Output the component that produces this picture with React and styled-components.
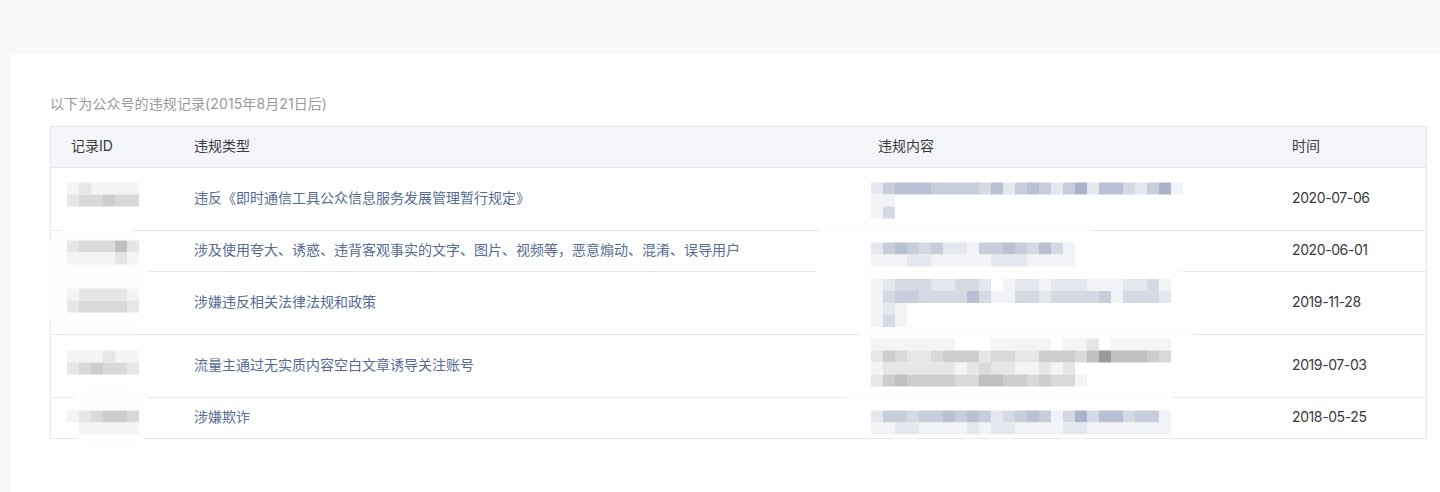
import React from "react";
import styled, { createGlobalStyle } from "styled-components";

const GlobalStyle = createGlobalStyle`
  html, body { margin: 0; padding: 0; background: #f6f7f9; }
  body { font-family: Inter, "Noto Sans CJK SC", "Noto Sans", sans-serif; -webkit-font-smoothing: antialiased; }
`;

const Page = styled.div`
  padding: 54px 0 0 10px;
  min-height: 492px;
  box-sizing: border-box;
  display: flex;
`;

const Card = styled.section`
  flex: 1;
  background: #ffffff;
  border-radius: 4px 0 0 0;
  padding: 40px 13px 60px 40px;
`;

const Caption = styled.p`
  margin: 0 0 12px;
  padding-bottom: 2px;
  height: 18px;
  font-size: 14px;
  line-height: 20px;
  color: #9a9a9a;
  letter-spacing: 0.1px;
`;

const TableWrap = styled.div`
  position: relative;
  border: 1px solid #e5e7ec;
`;

const Row = styled.div`
  display: grid;
  grid-template-columns: 123px 684px 414px 154px;
  align-items: center;
  height: ${(p) => (p.$tall ? 62 : 40)}px;
  border-bottom: ${(p) => (p.$last ? "none" : "1px solid #e5e7ec")};
  background: ${(p) => (p.$head ? "#f4f5f9" : "transparent")};
  font-size: 14px;
  line-height: 20px;
`;

const Cell = styled.div`
  padding: 0 20px 2px;
  color: ${(p) => (p.$link ? "#576b95" : "#3a3a3a")};
  letter-spacing: ${(p) => (p.$num ? "-0.4px" : "normal")};
  white-space: nowrap;
  position: relative;
  z-index: 2;
`;

const MosaicGrid = styled.div`
  display: grid;
  grid-auto-flow: row;
  grid-auto-rows: 12px;
  grid-template-columns: repeat(${(p) => p.$cols}, 12px);
  margin-left: ${(p) => p.$dx}px;
  transform: translateY(${(p) => p.$dy}px);
`;

const Px = styled.span`
  display: block;
  background: ${(p) => p.$c};
`;

const Smear = styled.div`
  position: absolute;
  z-index: 1;
  left: ${(p) => p.$x}px;
  top: ${(p) => p.$y}px;
  width: ${(p) => p.$w}px;
  height: ${(p) => p.$h}px;
  background: #fefefe;
  border-radius: ${(p) => p.$r || 6}px;
`;

const BLUE = ["transparent", "#f2f3f7", "#e4e7ee", "#d5d9e4", "#c8cddb", "#bac0d3", "#aab3c9"];
const GRAY = ["transparent", "#f4f4f4", "#e6e6e6", "#d9d9d9", "#cdcdcd", "#c0c0c0", "#999999"];

function Mosaic({ rows, palette, dx = 0, dy = 0 }) {
  const cols = Math.max(...rows.map((r) => r.length));
  const cells = [];
  rows.forEach((r, ri) => {
    for (let i = 0; i < cols; i++) {
      const v = i < r.length ? Number(r[i]) : 0;
      cells.push(<Px key={ri + "-" + i} $c={palette[v]} />);
    }
  });
  return (
    <MosaicGrid $cols={cols} $dx={dx} $dy={dy}>
      {cells}
    </MosaicGrid>
  );
}

const records = [
  {
    tall: true,
    id: { rows: ["121111", "233433"], dy: -3.5 },
    type: "违反《即时通信工具公众信息服务发展管理暂行规定》",
    content: {
      palette: BLUE,
      rows: ["24555444435245424625532461", "11", "13"],
      dy: 2.5,
    },
    date: "2020-07-06",
  },
  {
    tall: false,
    id: { rows: ["233352", "111121"], dy: 2.5 },
    type: "涉及使用夸大、诱惑、违背客观事实的文字、图片、视频等，恶意煽动、混淆、误导用户",
    content: {
      palette: BLUE,
      rows: ["24543422144543531", "11122111112221111"],
      dy: 4.5,
    },
    date: "2020-06-01",
  },
  {
    tall: true,
    id: { rows: ["122221", "233332"], dy: -1.5 },
    type: "涉嫌违反相关法律法规和政策",
    content: {
      palette: BLUE,
      rows: [
        "1233322332012212221112231",
        "1344333353113323333413332",
        "121",
        "131",
      ],
      dy: 1,
    },
    date: "2019-11-28",
  },
  {
    tall: true,
    id: { rows: ["111211", "234332"], dy: -2.5 },
    type: "流量主通过无实质内容空白文章诱导关注账号",
    content: {
      palette: GRAY,
      rows: [
        "1111111000111110112011111",
        "2432234442332244435655543",
        "12222221232211212",
        "245444433554434331",
      ],
      dy: -2.5,
    },
    date: "2019-07-03",
  },
  {
    tall: false,
    id: { rows: ["123443", "011111"], dy: 5.5 },
    type: "涉嫌欺诈",
    content: {
      palette: BLUE,
      rows: ["2443445454234541363553441", "1122111121221111221111111"],
      dy: 5.5,
    },
    date: "2018-05-25",
  },
];

const smears = [
  { x: -6, y: 100, w: 104, h: 107, r: 30 },
  { x: 22, y: 258, w: 75, h: 62, r: 20 },
  { x: 768, y: 98, w: 272, h: 12, r: 6 },
  { x: 765, y: 139, w: 367, h: 12, r: 6 },
  { x: 808, y: 201, w: 334, h: 13, r: 6 },
  { x: 795, y: 264, w: 327, h: 14, r: 7 },
];

export default function App() {
  return (
    <>
      <GlobalStyle />
      <Page>
        <Card>
          <Caption>以下为公众号的违规记录(2015年8月21日后)</Caption>
          <TableWrap>
            <Row $head>
              <Cell>记录ID</Cell>
              <Cell>违规类型</Cell>
              <Cell>违规内容</Cell>
              <Cell>时间</Cell>
            </Row>
            {records.map((r, i) => (
              <Row key={i} $tall={r.tall} $last={i === records.length - 1}>
                <Cell>
                  <Mosaic rows={r.id.rows} palette={GRAY} dx={-4} dy={r.id.dy} />
                </Cell>
                <Cell $link>{r.type}</Cell>
                <Cell>
                  <Mosaic
                    rows={r.content.rows}
                    palette={r.content.palette}
                    dx={-7}
                    dy={r.content.dy}
                  />
                </Cell>
                <Cell $num>{r.date}</Cell>
              </Row>
            ))}
            {smears.map((s, i) => (
              <Smear key={i} $x={s.x} $y={s.y} $w={s.w} $h={s.h} $r={s.r} />
            ))}
          </TableWrap>
        </Card>
      </Page>
    </>
  );
}
